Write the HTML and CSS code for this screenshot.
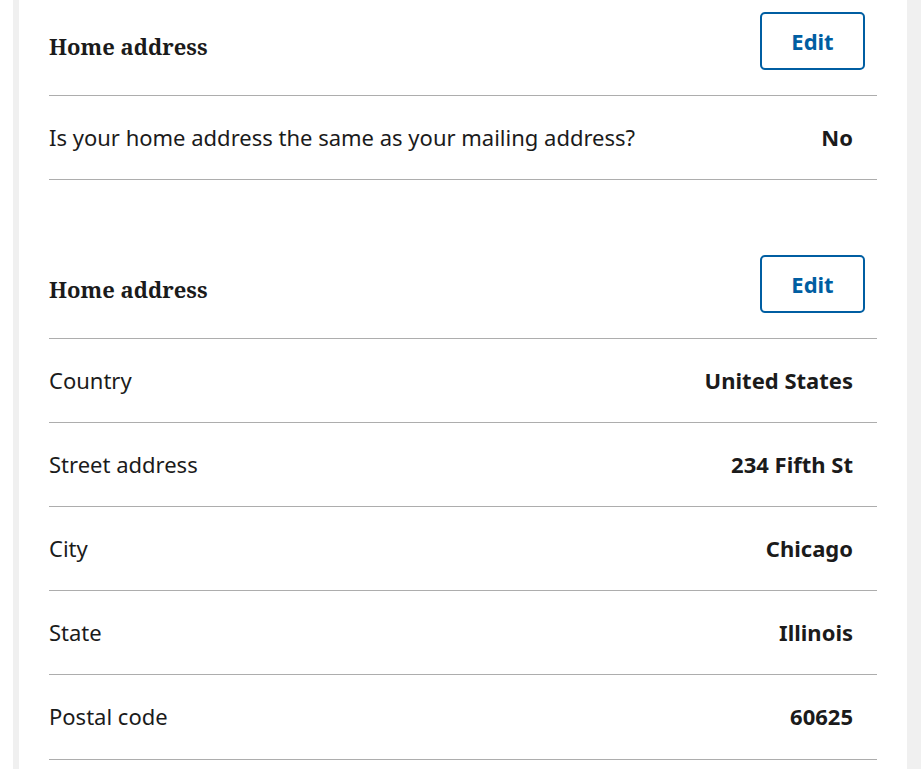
FILE: index.html
```html
<!DOCTYPE html>
<html lang="en">
<head>
<meta charset="utf-8">
<title>Review</title>
<link rel="stylesheet" href="styles.css">
</head>
<body>
<div class="frame">
  <main class="card">
    <section class="section">
      <div class="section-head">
        <h2 class="section-title">Home address</h2>
        <button class="edit-btn" type="button">Edit</button>
      </div>
      <dl class="rows">
        <div class="row"><dt>Is your home address the same as your mailing address?</dt><dd>No</dd></div>
      </dl>
    </section>
    <section class="section section-spaced">
      <div class="section-head">
        <h2 class="section-title">Home address</h2>
        <button class="edit-btn" type="button">Edit</button>
      </div>
      <dl class="rows">
        <div class="row"><dt>Country</dt><dd>United States</dd></div>
        <div class="row"><dt>Street address</dt><dd>234 Fifth St</dd></div>
        <div class="row"><dt>City</dt><dd>Chicago</dd></div>
        <div class="row"><dt>State</dt><dd>Illinois</dd></div>
        <div class="row row-last"><dt>Postal code</dt><dd>60625</dd></div>
      </dl>
    </section>
  </main>
</div>
</body>
</html>
```
FILE: styles.css
```css
html, body {
  margin: 0;
  padding: 0;
  background: #ffffff;
}
body {
  font-family: "Noto Sans", "Open Sans", sans-serif;
  color: #1b1b1b;
  display: flex;
  min-height: 769px;
}
.frame {
  flex: 1;
  margin-left: 13px;
  background: #f0f0f0;
  padding: 0 14px 0 6px;
  display: flex;
}
.card {
  flex: 1;
  background: #ffffff;
  padding: 0 30px;
}
.section-spaced {
  margin-top: 63px;
}
.section-head {
  display: flex;
  align-items: center;
  justify-content: space-between;
  padding: 12px 12px 25px 0;
  border-bottom: 1px solid #adadad;
}
.section-title {
  margin: 0;
  padding-top: 10px;
  font-family: "Noto Serif", "DejaVu Serif", serif;
  font-weight: 700;
  font-size: 22px;
  line-height: 1.2;
  color: #1b1b1b;
}
.edit-btn {
  box-sizing: border-box;
  width: 105px;
  height: 58px;
  background: #ffffff;
  border: 2.5px solid #005ea2;
  border-radius: 5px;
  color: #005ea2;
  font-family: "Noto Sans", "Open Sans", sans-serif;
  font-weight: 700;
  font-size: 22px;
  line-height: 1;
  padding: 0 0 1px;
  cursor: pointer;
}
.rows {
  margin: 0;
}
.row {
  display: flex;
  justify-content: space-between;
  align-items: center;
  padding: 25px 24px 25px 0;
  border-bottom: 1px solid #adadad;
  font-size: 22px;
  line-height: 33px;
}
.row-last {
  padding-bottom: 26px;
}
.row dt {
  font-weight: 400;
}
.row dd {
  margin: 0;
  font-weight: 700;
}
```
